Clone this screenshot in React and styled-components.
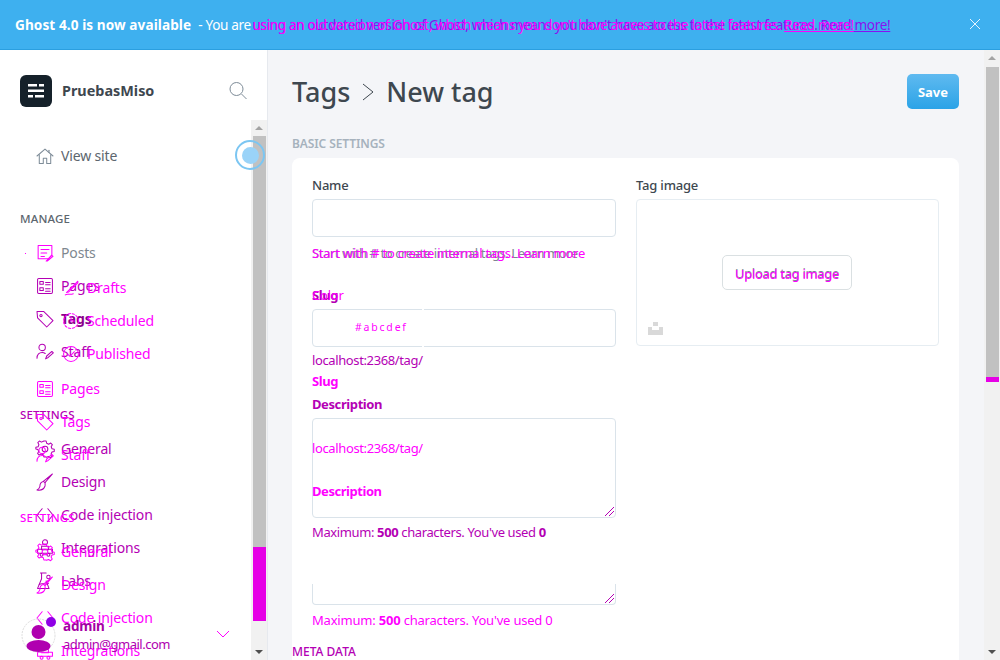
import React from 'react';
import styled, { createGlobalStyle } from 'styled-components';

const tones = { a: '#b400b4', b: '#ff00ff' };
const pick = (p, fallback) => tones[p.$tone] || fallback;

const GlobalStyle = createGlobalStyle`
  html, body { margin: 0; height: 100%; overflow: hidden; }
  body {
    font-family: "Noto Sans", "Open Sans", sans-serif;
    font-size: 14px;
    color: #3e474f;
    background: #f4f5f8;
  }
`;

const Page = styled.div`
  width: 1000px;
  height: 660px;
  display: flex;
  flex-direction: column;
  overflow: hidden;
`;

const Banner = styled.div`
  height: 49px;
  flex: none;
  display: flex;
  align-items: center;
  padding: 0 15px;
  position: relative;
  background: #3eb0ef;
  border-bottom: 1px solid #2b9fe0;
  color: #fff;
  font-size: 13.6px;
  white-space: nowrap;
`;

const BannerTitle = styled.b`
  font-weight: 700;
  letter-spacing: 0.08px;
  margin-right: 4px;
`;

const BannerLead = styled.span`
  letter-spacing: -0.36px;
`;

const BannerText = styled.span`
  position: absolute;
  left: 204px;
  letter-spacing: -0.36px;
  color: ${p => (p.$tone === 'b' ? '#ff00ff' : '#8a10f0')};
  a {
    color: inherit;
    text-decoration: underline;
  }
`;

const Hidden = styled.span`
  visibility: hidden;
`;

const CloseButton = styled.svg`
  position: absolute;
  right: 19px;
  top: 18px;
  width: 12px;
  height: 12px;
`;

const Body = styled.div`
  flex: 1;
  display: flex;
  min-height: 0;
`;

const Sidebar = styled.aside`
  width: 267px;
  flex: none;
  display: flex;
  flex-direction: column;
  position: relative;
  background: #fff;
  border-right: 1px solid #e6e9ee;
`;

const SiteHeader = styled.div`
  height: 32px;
  flex: none;
  display: flex;
  align-items: center;
  padding: 25px 19px 13px 20px;
  gap: 10px;
`;

const Logo = styled.div`
  width: 32px;
  height: 32px;
  border-radius: 6px;
  background: #15212a;
  display: flex;
  align-items: center;
  justify-content: center;
`;

const SiteName = styled.div`
  flex: 1;
  margin-top: -2px;
  font-size: 14.4px;
  font-weight: 700;
  color: #3e474f;
`;

const NavArea = styled.div`
  flex: 1;
  position: relative;
  overflow: hidden;
`;

const ViewSite = styled.div`
  margin-top: 19px;
`;

const NavHeading = styled.div`
  height: 18px;
  line-height: 18px;
  margin-top: ${p => p.$top}px;
  margin-bottom: 8px;
  padding-left: 20px;
  font-size: 11.5px;
  letter-spacing: 0.15px;
  font-weight: 500;
  text-transform: uppercase;
  color: ${p => pick(p, '#5c666e')};
`;

const NavRow = styled.div`
  height: 33px;
  margin-top: ${p => p.$top || 0}px;
  display: flex;
  align-items: center;
  gap: 8px;
  padding-left: ${p => (p.$sub ? 63 : 37)}px;
  font-size: 14px;
  letter-spacing: -0.15px;
  font-weight: ${p => (p.$bold ? 700 : 400)};
  color: ${p => (p.$bold ? '#8c008c' : pick(p, p.$muted ? '#7e878f' : '#5c666e'))};
  svg {
    flex: none;
    color: ${p => (p.$muted ? '#ff00ff' : pick(p, '#7e8c98'))};
  }
`;

const GhostNav = styled.div`
  position: absolute;
  top: 151px;
  left: 0;
  width: 100%;
`;

const StrayDot = styled.i`
  position: absolute;
  left: 25px;
  top: 133px;
  width: 1px;
  height: 1px;
  background: #ff00ff;
`;

const Icon = styled.svg`
  width: 16px;
  height: 16px;
  overflow: visible;
  fill: none;
  stroke: currentColor;
  stroke-width: 0.9;
  stroke-linecap: round;
  stroke-linejoin: round;
`;

const ScrollBar = styled.div`
  position: absolute;
  right: 0;
  top: 0;
  bottom: 0;
  width: 16px;
  background: #f1f1f1;
  display: flex;
  flex-direction: column;
  align-items: center;
`;

const ScrollArrow = styled.div`
  flex: none;
  width: 0;
  height: 0;
  margin: 6px 0;
  border-left: 4px solid transparent;
  border-right: 4px solid transparent;
  ${p => (p.$down ? 'border-top: 4px solid #505050; margin-top: auto;' : 'border-bottom: 4px solid #a3a3a3;')}
`;

const Thumb = styled.div`
  flex: none;
  width: 13px;
  margin-top: ${p => p.$gap || 0}px;
  height: ${p => p.$h}px;
  background: ${p => p.$color};
`;

const Ring = styled.div`
  position: absolute;
  right: 2px;
  top: 20px;
  width: 26px;
  height: 26px;
  border: 2px solid #7cc6f2;
  border-radius: 50%;
  display: flex;
  align-items: center;
  justify-content: center;
  &::after {
    content: '';
    width: 17px;
    height: 17px;
    border-radius: 50%;
    background: #9ad3f8;
  }
`;

const UserCard = styled.div`
  position: absolute;
  left: 21px;
  bottom: 0;
  width: 209px;
  height: 50px;
`;

const Avatar = styled.svg`
  position: absolute;
  left: 0;
  top: 8px;
  width: 35px;
  height: 35px;
`;

const Badge = styled.div`
  position: absolute;
  left: 25px;
  top: 7px;
  width: 10px;
  height: 10px;
  border-radius: 50%;
  background: #8f00e6;
`;

const UserName = styled.div`
  position: absolute;
  left: 42px;
  top: 7px;
  font-size: 13.5px;
  letter-spacing: -0.2px;
  font-weight: 700;
  color: #a400a4;
`;

const UserMail = styled.div`
  position: absolute;
  left: 42px;
  top: 25px;
  font-size: 13px;
  letter-spacing: -0.5px;
  color: #b000b0;
`;

const UserChevron = styled.svg`
  position: absolute;
  right: 0;
  top: 19px;
  width: 14px;
  height: 10px;
  fill: none;
  stroke: #ff00ff;
`;

const Main = styled.main`
  flex: 1;
  min-width: 0;
  position: relative;
  padding: 0 41px 0 24px;
  overflow: hidden;
`;

const TitleBar = styled.header`
  height: 83px;
  display: flex;
  align-items: center;
  justify-content: space-between;
`;

const Crumbs = styled.h1`
  margin: 0;
  display: flex;
  align-items: center;
  gap: 11px;
  font-size: 27px;
  font-weight: 500;
  color: #3e474f;
`;

const SaveButton = styled.button`
  width: 52px;
  height: 35px;
  border: 0;
  border-radius: 5px;
  background: linear-gradient(#5fbaf0, #2ba3e7);
  color: #fff;
  font: 700 13px "Noto Sans", sans-serif;
  padding: 0;
`;

const SectionHeading = styled.h2`
  margin: 2px 0 0;
  height: 23px;
  line-height: 17px;
  font-size: 12px;
  letter-spacing: -0.1px;
  font-weight: 600;
  text-transform: uppercase;
  color: #a6b2bd;
`;

const Card = styled.section`
  background: #fff;
  border-radius: 8px 8px 0 0;
  height: 520px;
`;

const FormGrid = styled.div`
  display: grid;
  grid-template-columns: 304px 303px;
  gap: 20px;
  padding: 18px 20px 0;
`;

const Label = styled.label`
  display: block;
  height: 18px;
  line-height: 18px;
  position: relative;
  margin-top: ${p => p.$top || 0}px;
  margin-bottom: 5px;
  font-size: 13px;
  letter-spacing: ${p => (p.$bold ? -0.4 : -0.2)}px;
  font-weight: ${p => (p.$bold ? 700 : 500)};
  color: ${p => pick(p, '#3e474f')};
`;

const Overlay = styled.span`
  position: absolute;
  left: ${p => p.$x || 0}px;
  top: ${p => p.$y || 0}px;
  white-space: nowrap;
  font-weight: ${p => (p.$bold ? 700 : 400)};
  font-size: ${p => p.$size || 13}px;
  letter-spacing: ${p => p.$ls || 0}px;
  color: ${p => pick(p, '#3e474f')};
`;

const Box = styled.div`
  position: relative;
  height: ${p => p.$h}px;
  box-sizing: border-box;
  border: 1px solid #dae3ea;
  border-radius: 4px;
  background: #fff;
`;

const SlugTick = styled.i`
  position: absolute;
  left: 109px;
  width: 2px;
  height: 3px;
  background: #fff;
  ${p => (p.$bottom ? 'bottom: -1px;' : 'top: -1px;')}
`;

const Grip = styled.svg`
  position: absolute;
  right: 1px;
  bottom: 1px;
  width: 9px;
  height: 9px;
  stroke: #b400b4;
`;

const TextareaTail = styled.div`
  position: relative;
  height: 21px;
  box-sizing: border-box;
  margin-top: 43px;
  border: 1px solid #dae3ea;
  border-top: 0;
  border-radius: 0 0 4px 4px;
`;

const HelpLine = styled.p`
  position: relative;
  margin: ${p => p.$top || 6}px 0 0;
  height: 18px;
  line-height: 18px;
  font-size: 13px;
  letter-spacing: ${p => p.$ls || -0.38}px;
  white-space: nowrap;
  color: ${p => pick(p, '#7c8790')};
  b {
    font-weight: 700;
  }
`;

const ImageBox = styled(Box)`
  display: flex;
  align-items: center;
  justify-content: center;
  border-color: #e6edf2;
`;

const UploadButton = styled.div`
  position: relative;
  width: 130px;
  height: 35px;
  margin-right: 1px;
  box-sizing: border-box;
  border: 1px solid #dae0e2;
  border-radius: 5px;
  display: flex;
  align-items: center;
  justify-content: center;
  font-size: 13px;
  letter-spacing: -0.3px;
  color: #7c8790;
`;

const PlaceholderIcon = styled.svg`
  position: absolute;
  left: 11px;
  bottom: 9px;
  width: 15px;
  height: 15px;
  fill: #d9d9d9;
`;

const MetaHeading = styled.h2`
  margin: 14px 0 0;
  font-size: 12px;
  font-weight: 500;
  line-height: 17px;
  color: #b400b4;
`;

const paths = {
  home: <><path d="M1 8l7-6 7 6" /><path d="M3 7v7.5h3.5V10h3v4.5H13V7" /><path d="M11.5 3v2" /></>,
  posts: <><path d="M2 1.5h12v8l-3 3.5H2z" /><path d="M4.5 5h7M4.5 8h5M4.5 11h3" /><path d="M9 15l5-5 1 1-5 4z" /></>,
  pages: <><rect x="1.5" y="1.5" width="13" height="13" rx="1" /><rect x="3.5" y="4" width="3" height="2.5" /><rect x="3.5" y="9.5" width="3" height="2.5" /><path d="M8.5 5h4M8.5 10.5h4M8.5 7h4M8.5 12.5h4" /></>,
  tag: <><path d="M1 1.5h6l8 8-5.5 5.5-8-8z" /><circle cx="4.5" cy="5" r="1" /></>,
  staff: <><circle cx="5.5" cy="4" r="2.8" /><path d="M1 13.5c0-3.5 2-5 4.5-5 1 0 2 .3 2.7.8" /><path d="M8.5 14l1-2.5 4.5-4 1.3 1.3-4.5 4z" /></>,
  gear: <><circle cx="8" cy="8" r="2.5" /><path d="M7 1h2l.5 2 1.7.8 1.800-1 1.400 1.400-1 1.800.7 1.800 2 .4v2l-2 .5-.8 1.700 1 1.800-1.400 1.400-1.800-1-1.700.7L9 15H7l-.5-2-1.800-.7-1.800 1-1.400-1.400 1-1.800L1.800 8.500 0 8V6.500l2-.5.7-1.800-1-1.800L3.100 1l1.800 1 1.700-.7z" /></>,
  brush: <><path d="M14.500 1L8 8.500l-1.500-1z" /><path d="M6.500 7.500C4 8 3.500 10 3.500 12 3 13.500 2 14.500 1 15c3 .5 6-.5 7-3.500.3-1 0-2.500 0-3" /></>,
  code: <><path d="M5.500 2.500L1 8l4.500 5.500" /><path d="M10.500 2.500L15 8l-4.500 5.500" /></>,
  plug: <><circle cx="8" cy="3" r="2.200" /><path d="M5 6.500h6v3H5z" /><path d="M1.500 9h13v3.500h-13z" /><circle cx="5" cy="14" r="1.300" /><circle cx="11" cy="14" r="1.300" /></>,
  labs: <><path d="M4 1h5M5 1v5l-3.500 8.500h10L9 8" /><circle cx="11" cy="4.500" r="1.500" /><path d="M3 11c3-2 5 1 8-1" /></>,
  draft: <><path d="M14 2l-8 8-2 2 2-.5 8-8z" /><path d="M3 14c2-1.500 4 .5 7-1" /></>,
  clock: <><circle cx="8" cy="8" r="6.500" strokeDasharray="2 1.500" /><path d="M8 4v4h3" /></>,
  published: <><circle cx="8" cy="8" r="6.500" /><path d="M5 8l2 2 4-4" /></>
};

const NavIcon = ({ name }) => <Icon viewBox="1 1 14 14">{paths[name]}</Icon>;

const NavItem = ({ icon, label, ...rest }) => (
  <NavRow {...rest}>
    <NavIcon name={icon} />
    {label}
  </NavRow>
);

const OldNav = () => (
  <>
    <NavItem $muted icon="posts" label="Posts" />
    <NavItem $tone="a" icon="pages" label="Pages" />
    <NavItem $tone="a" $bold icon="tag" label="Tags" />
    <NavItem $tone="a" icon="staff" label="Staff" />
    <NavHeading $tone="a" $top={38}>Settings</NavHeading>
    <NavItem $tone="a" icon="gear" label="General" />
    <NavItem $tone="a" icon="brush" label="Design" />
    <NavItem $tone="a" icon="code" label="Code injection" />
    <NavItem $tone="a" icon="plug" label="Integrations" />
    <NavItem $tone="a" icon="labs" label="Labs" />
  </>
);

const NewNav = () => (
  <GhostNav>
    <NavItem $tone="b" $sub icon="draft" label="Drafts" />
    <NavItem $tone="b" $sub icon="clock" label="Scheduled" />
    <NavItem $tone="b" $sub icon="published" label="Published" />
    <NavItem $tone="b" $top={2} icon="pages" label="Pages" />
    <NavItem $tone="b" icon="tag" label="Tags" />
    <NavItem $tone="b" icon="staff" label="Staff" />
    <NavHeading $tone="b" $top={38}>Settings</NavHeading>
    <NavItem $tone="b" icon="gear" label="General" />
    <NavItem $tone="b" icon="brush" label="Design" />
    <NavItem $tone="b" icon="code" label="Code injection" />
    <NavItem $tone="b" icon="plug" label="Integrations" />
  </GhostNav>
);

const App = () => (
  <Page>
    <GlobalStyle />
    <Banner>
      <BannerTitle>Ghost 4.0 is now available</BannerTitle>
      <BannerLead>&nbsp;- You are</BannerLead>
      <BannerText $tone="a">
        <Hidden>You are </Hidden>using an outdated version of Ghost, which means you don't have access to the latest features. <a>Read more!</a>
      </BannerText>
      <BannerText $tone="b">
        <Hidden>You are </Hidden>using an old version of Ghost, which means you don't have access to the latest features. <a>Read more!</a>
      </BannerText>
      <CloseButton viewBox="0 0 12 12" fill="none" stroke="#e8f4ff">
        <path d="M1 1l10 10M11 1L1 11" />
      </CloseButton>
    </Banner>
    <Body>
      <Sidebar>
        <SiteHeader>
          <Logo>
            <svg width="18" height="14" viewBox="0 0 18 14" fill="#fff">
              <rect x="1" y="0" width="9" height="2.500" />
              <rect x="12" y="0" width="5" height="2.500" />
              <rect x="1" y="5.500" width="16" height="2.500" />
              <rect x="1" y="11" width="5" height="2.500" />
              <rect x="8" y="11" width="9" height="2.500" />
            </svg>
          </Logo>
          <SiteName>PruebasMiso</SiteName>
          <svg width="20" height="20" viewBox="0 0 20 20" fill="none" stroke="#7e8c98">
            <circle cx="8.500" cy="8" r="6.500" />
            <path d="M13.500 13l5 5" />
          </svg>
        </SiteHeader>
        <NavArea>
          <ViewSite>
            <NavItem icon="home" label="View site" />
          </ViewSite>
          <NavHeading $top={38}>Manage</NavHeading>
          <OldNav />
          <NewNav />
          <StrayDot />
          <ScrollBar>
            <ScrollArrow />
            <Thumb $h={411} $color="#c1c1c1" />
            <Thumb $h={74} $color="#e600e6" />
            <ScrollArrow $down />
          </ScrollBar>
          <Ring />
        </NavArea>
        <UserCard>
          <Avatar viewBox="0 0 35 35">
            <circle cx="17.500" cy="17.500" r="16.500" fill="none" stroke="#ddd" strokeDasharray="2 1" />
            <circle cx="17.500" cy="14" r="7" fill="#b000b0" />
            <ellipse cx="17.500" cy="28" rx="12" ry="6" fill="#b000b0" />
          </Avatar>
          <Badge />
          <UserName>admin</UserName>
          <UserMail>admin@gmail.com</UserMail>
          <UserChevron viewBox="0 0 14 10"><path d="M1 2l6 6 6-6" /></UserChevron>
        </UserCard>
      </Sidebar>
      <Main>
        <TitleBar>
          <Crumbs>
            <span>Tags</span>
            <svg width="14" height="18" viewBox="0 0 14 18" fill="none" stroke="#3e474f">
              <path d="M2 1l10 8-10 8" />
            </svg>
            <span>New tag</span>
          </Crumbs>
          <SaveButton>Save</SaveButton>
        </TitleBar>
        <SectionHeading>Basic settings</SectionHeading>
        <Card>
          <FormGrid>
            <div>
              <Label>Name</Label>
              <Box $h={38} />
              <HelpLine $top={7} $ls={-0.42}>
                Start with # to create internal tags. Learn more
                <Overlay $tone="b" $ls={-0.27}>Start with # to create internal tags. Learn more</Overlay>
              </HelpLine>
              <Label $top={24} $tone="a" $bold>
                Slug
                <Overlay $tone="b" $ls={-0.2}>Color</Overlay>
              </Label>
              <Box $h={38}>
                <SlugTick />
                <SlugTick $bottom />
                <Overlay $tone="b" $x={42} $y={10} $size={10.500} $ls={1.800}>#abcdef</Overlay>
              </Box>
              <HelpLine $top={4} $tone="a">localhost:2368/tag/</HelpLine>
              <Label $top={3} $tone="b" $bold>Slug</Label>
              <Label $top={0} $tone="a" $bold>Description</Label>
              <Box $h={100}>
                <Overlay $tone="b" $x={-1} $y={20} $ls={-0.37}>localhost:2368/tag/</Overlay>
                <Overlay $tone="b" $bold $x={-1} $y={63} $ls={-0.45}>Description</Overlay>
                <Grip viewBox="0 0 9 9"><path d="M0 9l9-9M4 9l5-5" /></Grip>
              </Box>
              <HelpLine $top={5} $tone="a">
                Maximum: <b>500</b> characters. You've used <b>0</b>
              </HelpLine>
              <TextareaTail>
                <Grip viewBox="0 0 9 9"><path d="M0 9l9-9M4 9l5-5" /></Grip>
              </TextareaTail>
              <HelpLine $tone="b" $ls={-0.2}>
                Maximum: <b>500</b> characters. You've used 0
              </HelpLine>
            </div>
            <div>
              <Label>Tag image</Label>
              <ImageBox $h={147}>
                <UploadButton>
                  Upload tag image
                  <Overlay $tone="b" $x={12} $y={9} $ls={-0.3}>Upload tag image</Overlay>
                </UploadButton>
                <PlaceholderIcon viewBox="0 0 15 15">
                  <path d="M5 1h5v4H5zM0 6h4v3h7V6h4v8H0z" />
                </PlaceholderIcon>
              </ImageBox>
            </div>
          </FormGrid>
          <MetaHeading>META DATA</MetaHeading>
        </Card>
        <ScrollBar>
          <ScrollArrow />
          <Thumb $gap={1} $h={310} $color="#c1c1c1" />
          <Thumb $h={5} $color="#e600e6" />
          <ScrollArrow $down />
        </ScrollBar>
      </Main>
    </Body>
  </Page>
);

export default App;
